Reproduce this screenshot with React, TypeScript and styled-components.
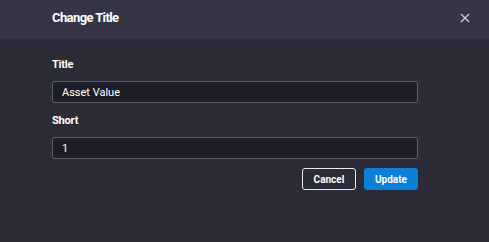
import * as React from 'react';
import styled, { createGlobalStyle } from 'styled-components';

const GlobalStyle = createGlobalStyle`
  html, body {
    margin: 0;
    padding: 0;
    background: #2c2c38;
    font-family: Roboto, "Liberation Sans", Arial, sans-serif;
  }
`;

const App: React.FC = () => {
  return (
    <>
      <GlobalStyle />
      <Dialog>
        <Header>
          <HeaderTitle>Change Title</HeaderTitle>
          <CloseButton aria-label="Close">
            <svg width="10" height="10" viewBox="0 0 10 10">
              <path
                d="M1 1 L9 9 M9 1 L1 9"
                stroke="#d0d0d8"
                strokeWidth="1.2"
                fill="none"
              />
            </svg>
          </CloseButton>
        </Header>

        <Body>
          <Field>
            <Label>Title</Label>
            <Input defaultValue="Asset Value" />
          </Field>
          <Field>
            <Label>Short</Label>
            <Input defaultValue="1" />
          </Field>
          <Actions>
            <Button variant="outline">Cancel</Button>
            <Button variant="primary">Update</Button>
          </Actions>
        </Body>
      </Dialog>
    </>
  );
};

const Dialog = styled.div`
  width: 489px;
  height: 242px;
  background: #2c2c38;
  display: flex;
  flex-direction: column;
`;

const Header = styled.header`
  height: 39px;
  background: #363545;
  display: flex;
  align-items: center;
  justify-content: space-between;
  padding: 0 19px 0 52px;
  box-sizing: border-box;
`;

const HeaderTitle = styled.h2`
  margin: 0;
  font-size: 13px;
  font-weight: 700;
  color: #ffffff;
  letter-spacing: -0.6px;
  margin-top: -4px;
`;

const CloseButton = styled.button`
  background: none;
  border: none;
  padding: 0;
  width: 10px;
  height: 10px;
  display: flex;
  cursor: pointer;
  margin-top: -4px;
`;

const Body = styled.div`
  display: flex;
  flex-direction: column;
  padding: 19px 71px 0 52px;
`;

const Field = styled.div`
  display: flex;
  flex-direction: column;
  gap: 9px;
  margin-bottom: 11px;

  & + & {
    margin-bottom: 9px;
  }
`;

const Label = styled.label`
  font-size: 11px;
  line-height: 14px;
  font-weight: 700;
  color: #ffffff;
  letter-spacing: -0.2px;
`;

const Input = styled.input`
  height: 22px;
  box-sizing: border-box;
  background: #1d1d27;
  border: 1px solid #5e5e6a;
  border-radius: 3px;
  padding: 0 9px;
  font-family: Roboto, "Liberation Sans", Arial, sans-serif;
  font-size: 11px;
  color: #ffffff;
  outline: none;
`;

const Actions = styled.div`
  display: flex;
  justify-content: flex-end;
  gap: 8px;
`;

const Button = styled.button<{ variant: 'outline' | 'primary' }>`
  height: 22px;
  min-width: 54px;
  padding: 0 10px;
  border-radius: 3px;
  font-family: Roboto, "Liberation Sans", Arial, sans-serif;
  font-size: 10px;
  font-weight: 700;
  color: #ffffff;
  cursor: pointer;
  box-sizing: border-box;
  background: ${({ variant }) => (variant === 'primary' ? '#0b80d8' : 'transparent')};
  border: 1px solid ${({ variant }) => (variant === 'primary' ? '#0b80d8' : '#e8e8ee')};
`;

export default App;
